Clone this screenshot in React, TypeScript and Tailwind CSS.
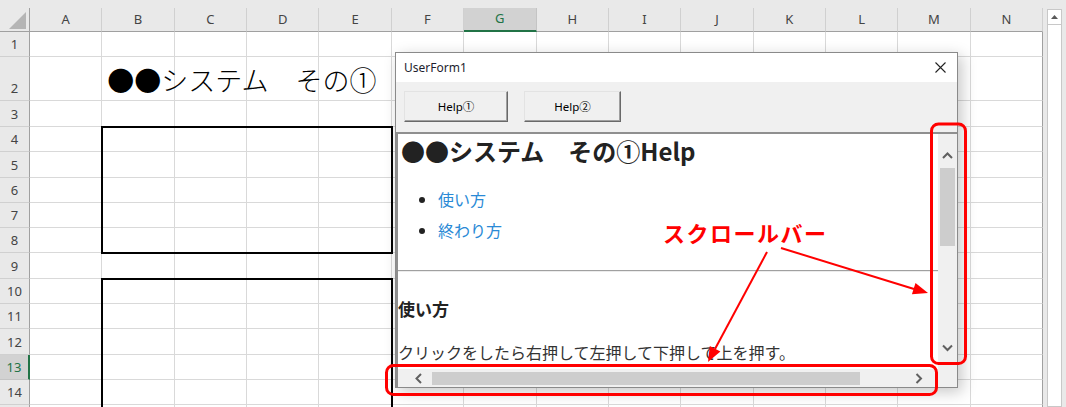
import React from 'react';

const COLS = ['A', 'B', 'C', 'D', 'E', 'F', 'G', 'H', 'I', 'J', 'K', 'L', 'M', 'N'];
const ROWS = Array.from({ length: 15 }, (_, i) => i + 1);

const SANS = "font-['Noto_Sans','Noto_Sans_CJK_JP',sans-serif]";
const JP = "font-['Noto_Sans_CJK_JP',sans-serif]";

function Chevron({ dir }: { dir: 'up' | 'down' | 'left' | 'right' }) {
  const d = {
    up: 'M1 6 L5.5 1.5 L10 6',
    down: 'M1 1.5 L5.5 6 L10 1.5',
    left: 'M6 1 L1.5 5.5 L6 10',
    right: 'M1.5 1 L6 5.5 L1.5 10',
  }[dir];
  const vertical = dir === 'up' || dir === 'down';
  return (
    <svg width={vertical ? 11 : 8} height={vertical ? 8 : 11} viewBox={vertical ? '0 0 11 8' : '0 0 8 11'}>
      <path d={d} fill="none" stroke="#606060" strokeWidth={2} />
    </svg>
  );
}

function Sheet() {
  return (
    <div className="flex flex-col w-[1043px] shrink-0">
      <div className="h-[8px] shrink-0 bg-[#e9e9e9]" />
      <div className="grid shrink-0">
        {/* cells */}
        <div className="col-start-1 row-start-1 grid grid-cols-[30px_repeat(14,72.36px)] grid-rows-[24px_25px_44px_26px_repeat(12,25.3px)]">
          <div className="bg-[#e9e9e9] border-r border-b border-[#a0a0a0] flex items-end justify-end pr-[3px] pb-[2px]">
            <svg width="17" height="17" viewBox="0 0 17 17">
              <path d="M17 0 L17 17 L0 17 Z" fill="#b5b5b5" />
            </svg>
          </div>
          {COLS.map((c) => (
            <div
              key={c}
              className={
                c === 'G'
                  ? `bg-[#d2d2d2] text-[#217346] border-r border-[#c4c4c4] border-b-2 border-b-[#217346] flex items-center justify-center text-[13px] ${SANS}`
                  : `bg-[#e9e9e9] text-[#444] border-r border-[#d0d0d0] border-b border-b-[#a0a0a0] flex items-center justify-center text-[13px] ${SANS}`
              }
            >
              {c}
            </div>
          ))}
          {ROWS.map((r) => (
            <React.Fragment key={r}>
              <div
                className={
                  r === 13
                    ? `bg-[#d2d2d2] text-[#217346] border-b border-[#c4c4c4] border-r-2 border-r-[#217346] flex items-end justify-center pb-[3px] leading-[17px] text-[13px] ${SANS}`
                    : `bg-[#e9e9e9] text-[#444] border-b border-[#d0d0d0] border-r border-r-[#a0a0a0] flex items-end justify-center pb-[3px] leading-[17px] text-[13px] ${SANS}`
                }
              >
                {r}
              </div>
              {COLS.map((c) => (
                <div
                  key={c}
                  className={c === 'N' ? 'border-b border-[#d9d9d9] border-r border-r-[#a0a0a0]' : 'border-r border-b border-[#d9d9d9]'}
                />
              ))}
            </React.Fragment>
          ))}
        </div>
        {/* borders and text drawn over the cells */}
        <div className="col-start-1 row-start-1 grid grid-cols-[30px_repeat(14,72.36px)] grid-rows-[24px_25px_44px_26px_repeat(12,25.3px)] pointer-events-none">
          <div className={`col-start-3 col-end-9 row-start-3 row-end-4 flex items-center pl-[5px] pt-[2px] text-[27px] text-black whitespace-nowrap ${JP} font-light`}>
            ●●システム　その①
          </div>
          <div className="col-start-3 col-end-7 row-start-5 row-end-10 -m-px border-2 border-black" />
          <div className="col-start-3 col-end-7 row-start-11 row-end-17 -m-px border-2 border-black" />
        </div>
      </div>
    </div>
  );
}

function ExcelScrollbar() {
  return (
    <div className="flex-1 bg-[#e9e9e9] pt-[9px] pl-[4px] pr-[4px]">
      <div className="h-full bg-white border border-[#c8c8c8] flex flex-col">
        <div className="h-[15px] border-b border-[#c8c8c8] flex items-center justify-center">
          <svg width="7" height="4" viewBox="0 0 7 4">
            <path d="M0 4 L3.5 0 L7 4 Z" fill="#5a5a5a" />
          </svg>
        </div>
      </div>
    </div>
  );
}

function HelpContent() {
  return (
    <div className={`text-[#222] ${JP}`}>
      <h1 className="leading-[34px] text-[24px] font-bold pl-[3px] whitespace-nowrap">●●システム　その①Help</h1>
      <ul className="mt-[16px] pl-[40px] list-disc text-[16px] leading-[31px] text-[#2a8ad6] marker:text-[#222]">
        <li>使い方</li>
        <li>終わり方</li>
      </ul>
      <div className="mt-[24px] h-[2px] border-t border-[#a0a0a0] border-b border-b-[#ececec]" />
      <h2 className="mt-[25px] text-[17px] leading-[24px] font-bold">使い方</h2>
      <p className="mt-[19px] text-[16px] leading-[24px] text-[#333] whitespace-nowrap">
        クリックをしたら右押して左押して下押して上を押す。
      </p>
    </div>
  );
}

function UserForm() {
  return (
    <div className="absolute left-[395px] top-[52px] w-[563px] h-[336px] border border-[#8a8a8a] bg-[#f0f0f0] flex flex-col shadow-[4px_4px_14px_rgba(0,0,0,0.22)]">
      <div className="h-[29px] bg-white flex items-center justify-between pl-[8px] pr-[11px]">
        <span className={`text-[12px] text-[#1e1e2e] ${SANS}`}>UserForm1</span>
        <svg width="11" height="11" viewBox="0 0 11 11">
          <path d="M0.5 0.5 L10.5 10.5 M10.5 0.5 L0.5 10.5" stroke="#222" strokeWidth={1.1} />
        </svg>
      </div>
      <div className="flex gap-[16px] pl-[8px] pt-[9px] h-[40px]">
        {['Help①', 'Help②'].map((label, i) => (
          <div
            key={label}
            className={`${i === 0 ? 'w-[104px]' : 'w-[97px]'} h-[31px] bg-[#f0f0f0] border border-t-[#e3e3e3] border-l-[#e3e3e3] border-r-[#696969] border-b-[#696969] shadow-[inset_-1px_-1px_0_#a0a0a0] flex items-center justify-center text-[11.5px] text-black ${SANS}`}
          >
            {label}
          </div>
        ))}
      </div>
      <div className="mt-[10px] flex-1 border-t-2 border-l-2 border-t-[#8f8f8f] border-l-[#8f8f8f] bg-white grid grid-cols-[1fr_19px] grid-rows-[1fr_18px] overflow-hidden">
        <div className="overflow-hidden">
          <HelpContent />
        </div>
        <div className="bg-[#f0f0f0] flex flex-col">
          <div className="h-[34px] flex items-start justify-center pt-[18px]">
            <Chevron dir="up" />
          </div>
          <div className="h-[78px] mx-[2px] bg-[#cdcdcd]" />
          <div className="flex-1" />
          <div className="h-[36px] flex items-start justify-center pt-[11px]">
            <Chevron dir="down" />
          </div>
        </div>
        <div className="bg-[#f0f0f0] flex items-stretch">
          <div className="w-[34px] flex items-center justify-center pl-[8px]">
            <Chevron dir="left" />
          </div>
          <div className="w-[428px] mt-[3px] mb-[2px] bg-[#cdcdcd]" />
          <div className="flex-1 flex items-center justify-end pr-[15px]">
            <Chevron dir="right" />
          </div>
        </div>
        <div className="bg-[#f0f0f0]" />
      </div>
    </div>
  );
}

function Annotation() {
  return (
    <>
      <svg className="absolute left-0 top-0 pointer-events-none" width="1066" height="407" viewBox="0 0 1066 407">
        <rect x="931.5" y="124" width="34" height="239.5" rx="7" fill="none" stroke="#ff0000" strokeWidth={3} />
        <rect x="386.5" y="365.5" width="550" height="29" rx="7" fill="none" stroke="#ff0000" strokeWidth={3} />
        <line x1="767" y1="252" x2="715" y2="349" stroke="#ff0000" strokeWidth={2} />
        <path d="M708 362 L720.4 351.6 L709.8 346 Z" fill="#ff0000" />
        <line x1="781" y1="248" x2="914" y2="289" stroke="#ff0000" strokeWidth={2} />
        <path d="M928 293 L915.5 282.9 L911.9 294.3 Z" fill="#ff0000" />
      </svg>
      <div className={`absolute left-[663px] top-[217px] h-[30px] leading-[30px] text-[22px] font-bold tracking-[1.5px] text-[#ff0000] whitespace-nowrap pointer-events-none ${JP}`}>
        スクロールバー
      </div>
    </>
  );
}

export default function App() {
  return (
    <div className="relative w-[1066px] h-[407px] overflow-hidden bg-white flex">
      <Sheet />
      <ExcelScrollbar />
      <UserForm />
      <Annotation />
    </div>
  );
}
